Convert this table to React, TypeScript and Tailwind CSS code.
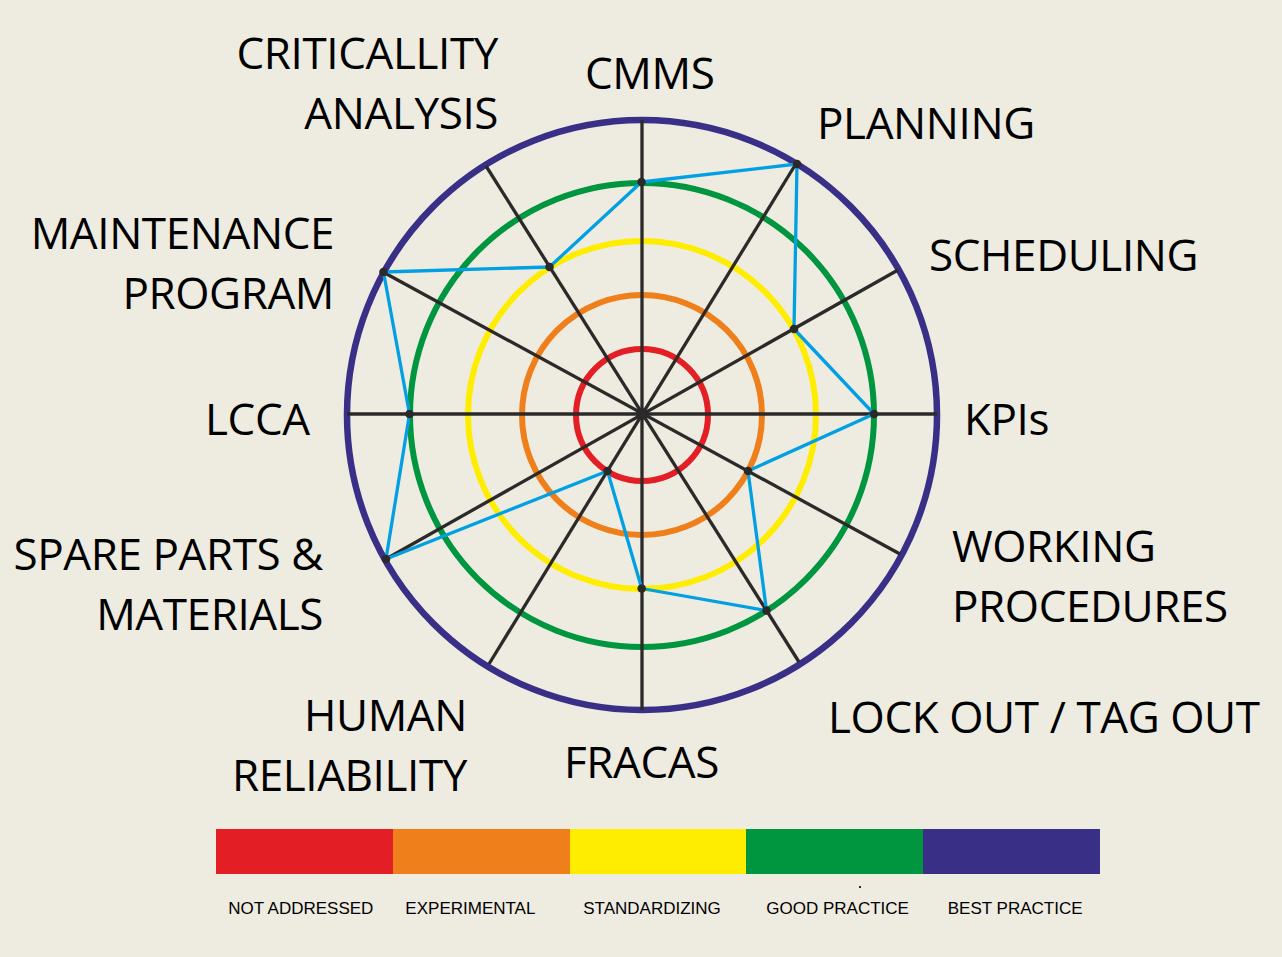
const rings = [
  { r: 66, color: "#e31e24", w: 6 },
  { r: 120, color: "#ef7f1a", w: 6 },
  { r: 174, color: "#ffed00", w: 6 },
  { r: 232, color: "#009640", w: 6 },
  { r: 295, color: "#3a2f86", w: 6.5 },
];

// spokes drawn as diameters through the centre
const spokes = [
  [347, 414, 937, 414],
  [642, 120, 642, 710],
  [386, 559, 898, 270],
  [489, 664, 797, 162],
  [486, 166, 799, 662],
  [383, 272, 900, 554],
];

// assessment polygon, clockwise from CMMS
const points = [
  [641.5, 182],
  [797, 164],
  [794, 329],
  [874, 414],
  [748, 471],
  [766.5, 610.5],
  [641.7, 588.5],
  [607.5, 471],
  [386, 559],
  [409.5, 414],
  [383.5, 272],
  [549.5, 267],
];

const legend = [
  { label: "NOT ADDRESSED", color: "bg-[#e31e24]", pad: "" },
  { label: "EXPERIMENTAL", color: "bg-[#ef7f1a]", pad: "pr-2" },
  { label: "STANDARDIZING", color: "bg-[#ffed00]", pad: "pl-1" },
  { label: "GOOD PRACTICE", color: "bg-[#009640]", pad: "pl-4" },
  { label: "BEST PRACTICE", color: "bg-[#3a2f86]", pad: "pl-2" },
];

function Radar() {
  return (
    <svg className="absolute inset-0" width="1282" height="829" viewBox="0 0 1282 829">
      {rings.map(ring => (
        <circle key={ring.r} cx={642} cy={415} r={ring.r} fill="none" stroke={ring.color} strokeWidth={ring.w} />
      ))}
      {spokes.map((s, i) => (
        <line key={i} x1={s[0]} y1={s[1]} x2={s[2]} y2={s[3]} stroke="#2b2a29" strokeWidth={3.3} />
      ))}
      <polygon
        points={points.map(p => p.join(",")).join(" ")}
        fill="none"
        stroke="#00a0e3"
        strokeWidth={3.3}
        strokeLinejoin="round"
      />
      {points.map((p, i) => (
        <circle key={i} cx={p[0]} cy={p[1]} r={4.3} fill="#2b2a29" />
      ))}
      <circle cx={642} cy={414} r={6} fill="#2b2a29" />
    </svg>
  );
}

export default function App() {
  return (
    <div className="w-[1282px] h-[957px] bg-[#eeebe1] flex flex-col overflow-hidden font-['Open_Sans',sans-serif] text-black">
      <div className="relative h-[829px] shrink-0 text-[44px] leading-[60px] tracking-[-0.4px]">
        <Radar />
        <div className="absolute right-[784px] top-[22px] text-right">
          CRITICALLITY
          <br />
          ANALYSIS
        </div>
        <div className="absolute left-[585px] top-[42px]">CMMS</div>
        <div className="absolute left-[817px] top-[92px]">PLANNING</div>
        <div className="absolute right-[948px] top-[202px] text-right">
          MAINTENANCE
          <br />
          PROGRAM
        </div>
        <div className="absolute left-[929px] top-[224px]">SCHEDULING</div>
        <div className="absolute left-[205px] top-[388px]">LCCA</div>
        <div className="absolute left-[964px] top-[388px]">KPIs</div>
        <div className="absolute right-[959px] top-[523px] text-right">
          SPARE PARTS &amp;
          <br />
          MATERIALS
        </div>
        <div className="absolute left-[952px] top-[515px]">
          WORKING
          <br />
          PROCEDURES
        </div>
        <div className="absolute right-[815px] top-[684px] text-right">
          HUMAN
          <br />
          RELIABILITY
        </div>
        <div className="absolute left-[828px] top-[686px]">LOCK OUT / TAG OUT</div>
        <div className="absolute left-[564px] top-[731px]">FRACAS</div>
      </div>

      <div className="pl-[216px]">
        <div className="flex w-[884px] h-[45px]">
          {legend.map(item => (
            <div key={item.label} className={`flex-1 ${item.color}`} />
          ))}
        </div>
        <div className="relative flex w-[884px] mt-[25px] font-['Liberation_Sans',sans-serif] text-[17px] leading-[20px]">
          <span className="absolute left-[643px] top-[-13px] w-[2px] h-[2px] bg-[#2b2a29]" />
          {legend.map(item => (
            <div key={item.label} className={`flex-1 text-center ${item.pad}`}>
              {item.label}
            </div>
          ))}
        </div>
      </div>
    </div>
  );
}
